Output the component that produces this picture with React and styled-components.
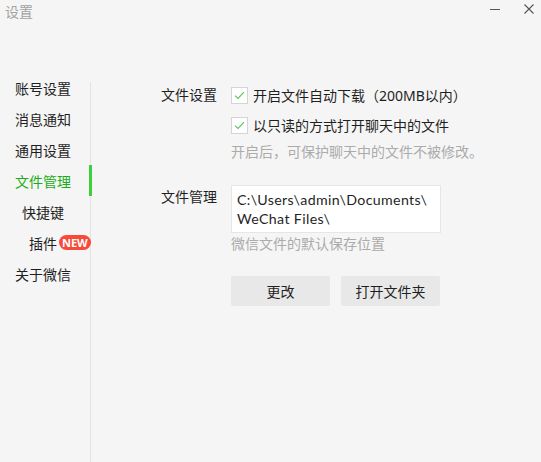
import React from 'react'
import styled, { createGlobalStyle } from 'styled-components'

const GlobalStyle = createGlobalStyle`
  html, body {
    margin: 0;
    padding: 0;
    background: #f5f5f5;
  }
  body {
    font-family: "Noto Sans", "Noto Sans CJK SC", sans-serif;
    color: #1f1f1f;
  }
`

const navItems = [
  { label: '账号设置', indent: 15 },
  { label: '消息通知', indent: 15 },
  { label: '通用设置', indent: 15 },
  { label: '文件管理', indent: 15, active: true },
  { label: '快捷键', indent: 22 },
  { label: '插件', indent: 29, badge: 'NEW' },
  { label: '关于微信', indent: 15 },
]

const CheckIcon = () => (
  <svg width="11" height="9" viewBox="0 0 11 9">
    <path d="M1 4.6 L4 7.4 L10 1.2" fill="none" stroke="#5cc45c" strokeWidth="1.1" />
  </svg>
)

const App = () => {
  return (
    <Window>
      <GlobalStyle />
      <TitleBar>
        <Title>设置</Title>
        <Controls>
          <ControlButton aria-label="minimize">
            <svg width="10" height="10" viewBox="0 0 10 10">
              <path d="M0 5.5 H10" stroke="#555" strokeWidth="1" />
            </svg>
          </ControlButton>
          <ControlButton aria-label="close">
            <svg width="10" height="10" viewBox="0 0 10 10">
              <path d="M0.5 0.5 L9.5 9.5 M9.5 0.5 L0.5 9.5" stroke="#555" strokeWidth="1.1" />
            </svg>
          </ControlButton>
        </Controls>
      </TitleBar>

      <Body>
        <Sidebar>
          {navItems.map((item) => (
            <NavItem key={item.label} $indent={item.indent} $active={item.active}>
              {item.label}
              {item.badge && <Badge>{item.badge}</Badge>}
            </NavItem>
          ))}
        </Sidebar>

        <Content>
          <Section>
            <Label>文件设置</Label>
            <Fields>
              <CheckRow>
                <CheckBox><CheckIcon /></CheckBox>
                开启文件自动下载（200MB以内）
              </CheckRow>
              <CheckRow $top={10}>
                <CheckBox><CheckIcon /></CheckBox>
                以只读的方式打开聊天中的文件
              </CheckRow>
              <Hint $top={7}>开启后，可保护聊天中的文件不被修改。</Hint>
            </Fields>
          </Section>

          <Section $top={23}>
            <Label $top={2}>文件管理</Label>
            <Fields>
              <PathBox>
                C:\Users\admin\Documents\<br />WeChat Files\
              </PathBox>
              <Hint $top={1}>微信文件的默认保存位置</Hint>
              <Buttons>
                <Button>更改</Button>
                <Button>打开文件夹</Button>
              </Buttons>
            </Fields>
          </Section>
        </Content>
      </Body>
    </Window>
  )
}

export default App

const Window = styled.div`
  width: 541px;
  height: 462px;
  display: flex;
  flex-direction: column;
  background: #f5f5f5;
  overflow: hidden;
`

const TitleBar = styled.div`
  height: 30px;
  display: flex;
  align-items: flex-start;
  justify-content: space-between;
  padding: 2px 7px 0 5px;
  box-sizing: border-box;
`

const Title = styled.div`
  font-size: 14px;
  line-height: 20px;
  color: #a3a3a3;
`

const Controls = styled.div`
  display: flex;
  gap: 24px;
  padding-top: 2px;
`

const ControlButton = styled.div`
  width: 10px;
  height: 10px;
  display: flex;
`

const Body = styled.div`
  flex: 1;
  display: flex;
  padding-top: 42px;
`

const Sidebar = styled.div`
  position: relative;
  width: 91px;
  flex-shrink: 0;

  &::before {
    content: '';
    position: absolute;
    top: 10px;
    bottom: 0;
    right: 0;
    width: 1px;
    background: #e2e2e2;
  }
`

const NavItem = styled.div`
  position: relative;
  height: 31px;
  display: flex;
  align-items: center;
  padding-left: ${(p) => p.$indent}px;
  font-size: 14px;
  color: ${(p) => (p.$active ? '#1aad19' : '#1f1f1f')};

  &::after {
    content: '';
    display: ${(p) => (p.$active ? 'block' : 'none')};
    position: absolute;
    top: 0;
    bottom: 0;
    right: -1px;
    width: 3px;
    background: #3ccf3c;
    z-index: 1;
  }
`

const Badge = styled.span`
  margin-left: 2px;
  height: 15px;
  padding: 0 3px;
  border-radius: 8px;
  background: #f74a3a;
  color: #fff;
  font-family: "Noto Sans", sans-serif;
  font-size: 11px;
  font-weight: 700;
  line-height: 15px;
`

const Content = styled.div`
  flex: 1;
  padding: 13px 0 0 70px;
`

const Section = styled.div`
  display: grid;
  grid-template-columns: 70px auto;
  margin-top: ${(p) => p.$top || 0}px;
`

const Label = styled.div`
  font-size: 14px;
  line-height: 20px;
  margin-top: ${(p) => p.$top || 0}px;
`

const Fields = styled.div`
  display: flex;
  flex-direction: column;
  align-items: flex-start;
`

const CheckRow = styled.div`
  display: flex;
  align-items: center;
  gap: 5px;
  height: 20px;
  font-size: 14px;
  margin-top: ${(p) => p.$top || 0}px;
`

const CheckBox = styled.div`
  width: 15px;
  height: 15px;
  border: 1px solid #d4d4d4;
  background: #fff;
  display: flex;
  align-items: center;
  justify-content: center;
`

const Hint = styled.div`
  font-size: 14px;
  line-height: 20px;
  color: #ababab;
  margin-top: ${(p) => p.$top || 0}px;
`

const PathBox = styled.div`
  width: 210px;
  height: 48px;
  box-sizing: border-box;
  padding: 4px 5px;
  background: #fff;
  border: 1px solid #e6e6e6;
  font-family: Lato, "Noto Sans CJK SC", sans-serif;
  font-size: 14.2px;
  letter-spacing: 0.35px;
  line-height: 19px;
  color: #1f1f1f;
`

const Buttons = styled.div`
  display: flex;
  gap: 11px;
  margin-top: 22px;
`

const Button = styled.div`
  width: 99px;
  height: 30px;
  display: flex;
  align-items: center;
  justify-content: center;
  background: #e8e8e8;
  border-radius: 2px;
  font-size: 14px;
  color: #1f1f1f;
`
